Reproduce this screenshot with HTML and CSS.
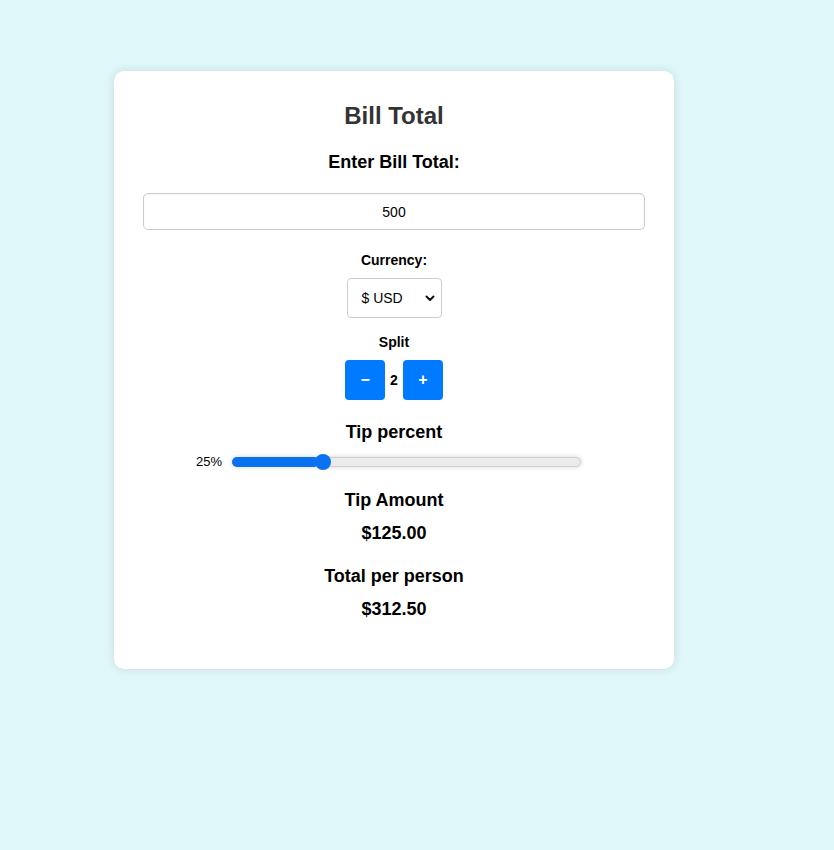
FILE: index.html
```html
<!DOCTYPE html>
<html>
<head>
<meta charset="utf-8">
<link rel="stylesheet" href="styles.css">
</head>
<body>
<div class="card">
  <h1 class="title">Bill Total</h1>
  <div class="label-lg">Enter Bill Total:</div>
  <input class="bill-input" type="text" value="500">
  <div class="label-sm currency-label">Currency:</div>
  <div class="select-wrap">
    <div class="select">
      <span>$ USD</span>
      <svg width="10" height="7" viewBox="0 0 10 7"><path d="M1.5 1.5 L5 5 L8.5 1.5" fill="none" stroke="#111" stroke-width="2" stroke-linecap="round" stroke-linejoin="round"/></svg>
    </div>
  </div>
  <div class="label-sm split-label">Split</div>
  <div class="split-row">
    <button class="btn">−</button>
    <span class="split-val">2</span>
    <button class="btn">+</button>
  </div>
  <div class="label-lg tip-label">Tip percent</div>
  <div class="slider-row">
    <span class="pct">25%</span>
    <div class="track">
      <div class="fill" style="width:25%"></div>
      <div class="thumb" style="left:25%"></div>
    </div>
  </div>
  <div class="label-lg res-label">Tip Amount</div>
  <div class="label-lg res-val">$125.00</div>
  <div class="label-lg res-label2">Total per person</div>
  <div class="label-lg res-val">$312.50</div>
</div>
</body>
</html>
```

FILE: styles.css
```css
html, body {
  margin: 0;
  padding: 0;
  background: #e0f7fa;
  font-family: "Liberation Sans", Arial, sans-serif;
}
body { height: 850px; }
.card {
  box-sizing: border-box;
  width: 560px;
  height: 598px;
  margin: 71px 0 0 114px;
  background: #fff;
  border-radius: 10px;
  box-shadow: 0 0 10px rgba(0,0,0,0.12);
  padding: 31px 30px 30px;
  text-align: center;
  display: flex;
  flex-direction: column;
  align-items: center;
}
.title {
  margin: 0;
  font-size: 24px;
  line-height: 28px;
  color: #333;
  font-weight: bold;
}
.label-lg {
  font-size: 18px;
  line-height: 22px;
  font-weight: bold;
  color: #000;
}
.label-sm {
  font-size: 14px;
  line-height: 17px;
  font-weight: bold;
  color: #000;
}
.title + .label-lg { margin-top: 21px; }
.bill-input {
  box-sizing: border-box;
  margin-top: 20px;
  width: 502px;
  height: 37px;
  border: 1px solid #ccc;
  border-radius: 5px;
  text-align: center;
  font-family: "Liberation Sans", Arial, sans-serif;
  font-size: 14px;
  color: #000;
  outline: none;
  box-shadow: inset 0 1px 2px rgba(0,0,0,0.05);
}
.currency-label { margin-top: 22px; }
.select-wrap { margin-top: 9px; }
.select {
  box-sizing: border-box;
  width: 95px;
  height: 40px;
  border: 1px solid #ccc;
  border-radius: 4px;
  display: flex;
  align-items: center;
  justify-content: space-between;
  padding: 0 6px 0 14px;
  font-size: 14px;
  color: #000;
  background: #fff;
}
.split-label { margin-top: 16px; }
.split-row {
  margin-top: 9px;
  display: flex;
  align-items: center;
  gap: 5px;
}
.btn {
  width: 40px;
  height: 40px;
  border: none;
  border-radius: 4px;
  background: #007bff;
  color: #fff;
  font-family: "Liberation Sans", Arial, sans-serif;
  font-size: 16px;
  font-weight: bold;
  padding: 0;
}
.split-val {
  font-size: 14px;
  font-weight: bold;
}
.tip-label { margin-top: 21px; }
.slider-row {
  margin-top: 11px;
  display: flex;
  align-items: center;
  align-self: flex-start;
  margin-left: 52px;
}
.pct {
  font-size: 13px;
  color: #000;
  width: 36px;
  text-align: left;
}
.track {
  position: relative;
  width: 349px;
  height: 10px;
  box-sizing: border-box;
  border-radius: 5px;
  background: #ebebeb;
  border: 1px solid #cfcfcf;
  box-shadow: 0 0 5px rgba(0,0,0,0.18);
}
.fill {
  position: absolute;
  left: -1px;
  top: -1px;
  height: 10px;
  border-radius: 5px;
  background: #0a72f0;
}
.thumb {
  position: absolute;
  top: 50%;
  width: 16px;
  height: 16px;
  margin-left: 3px;
  border-radius: 50%;
  background: #0a72f0;
  transform: translate(-50%, -50%);
}
.res-label { margin-top: 20px; }
.res-val { margin-top: 11px; }
.res-label2 { margin-top: 21px; }
```
